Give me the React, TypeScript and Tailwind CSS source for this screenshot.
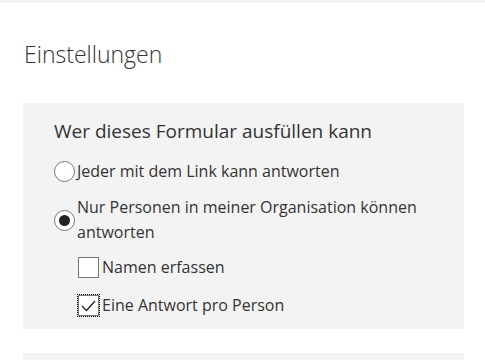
export default function App() {
  return (
    <div className="h-[360px] w-[485px] overflow-hidden bg-white text-[#333]" style={{ fontFamily: '"Open Sans", "Noto Sans", sans-serif' }}>
      <div className="h-[3px] bg-[#f4f4f4]" />
      <div className="px-[23px] pr-[21px]">
        <h1 className="pt-[35px] pl-[1px] text-[23px] font-light leading-[32px]">Einstellungen</h1>

        <section className="mt-[33px] h-[226px] bg-[#f3f3f3] pl-[31px] pr-[30px] pt-[14px]">
          <h2 className="text-[19px] leading-[28px]">Wer dieses Formular ausfüllen kann</h2>

          <div className="mt-[14px] flex items-center">
            <span className="h-[21px] w-[21px] shrink-0 rounded-full border border-[#777] bg-white" />
            <span className="pl-[2px] text-[16px] leading-[24px]">Jeder mit dem Link kann antworten</span>
          </div>

          <div className="mt-[12px] flex items-center">
            <span className="flex h-[21px] w-[21px] shrink-0 items-center justify-center rounded-full border border-[#777] bg-white">
              <span className="h-[11px] w-[11px] rounded-full bg-[#222]" />
            </span>
            <span className="pl-[2px] text-[16px] leading-[25px]">Nur Personen in meiner Organisation können antworten</span>
          </div>

          <div className="mt-[11px] flex flex-col gap-[16px] pl-[24px]">
            <label className="flex items-center">
              <span className="h-[21px] w-[21px] shrink-0 border border-[#777] bg-white" />
              <span className="pl-[3px] text-[16px] leading-[22px]">Namen erfassen</span>
            </label>
            <label className="flex items-center">
              <span className="flex h-[21px] w-[21px] shrink-0 items-center justify-center border border-[#777] bg-white outline-1 outline-dotted outline-black">
                <svg width="19" height="19" viewBox="0 0 19 19" fill="none" stroke="#222" strokeWidth="1.3">
                  <path d="M3 10 L7.5 14.5 L16 5" />
                </svg>
              </span>
              <span className="pl-[3px] text-[16px] leading-[22px]">Eine Antwort pro Person</span>
            </label>
          </div>
        </section>

        <div className="mt-[24px] h-[40px] bg-[#f3f3f3]" />
      </div>
    </div>
  );
}
